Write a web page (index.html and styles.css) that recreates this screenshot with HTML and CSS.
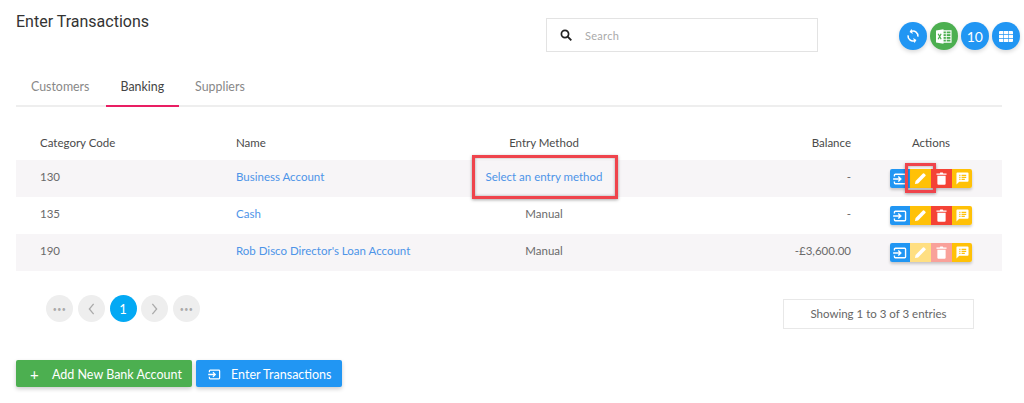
FILE: index.html
```html
<!DOCTYPE html>
<html lang="en">
<head>
<meta charset="utf-8">
<title>Enter Transactions</title>
<link rel="stylesheet" href="styles.css">
</head>
<body>
<svg class="defs" width="0" height="0" aria-hidden="true">
  <symbol id="i-enter" viewBox="0 0 16 14"><path d="M1.5 4V2.5a1 1 0 0 1 1-1h11a1 1 0 0 1 1 1v9a1 1 0 0 1-1 1h-11a1 1 0 0 1-1-1V10" fill="none" stroke="currentColor" stroke-width="1.6"/><path d="M0 7h8M6 4l3 3-3 3" fill="none" stroke="currentColor" stroke-width="1.6"/></symbol>
  <symbol id="i-pen" viewBox="0 0 14 14"><path d="M1 13l.7-3.4L9.6 1.7a1 1 0 0 1 1.4 0l1.3 1.3a1 1 0 0 1 0 1.4L4.4 12.3z" fill="currentColor"/></symbol>
  <symbol id="i-bin" viewBox="0 0 12 14"><path d="M0.5 1.5h3.5L4.7.5h2.6L8 1.5h3.5V3H.5zM1.5 4h9v8.6a1.2 1.2 0 0 1-1.2 1.2H2.7a1.2 1.2 0 0 1-1.2-1.2z" fill="currentColor"/></symbol>
  <symbol id="i-note" viewBox="0 0 14 14"><path fill-rule="evenodd" d="M1.5.5h11a1 1 0 0 1 1 1v8a1 1 0 0 1-1 1H3.5L.5 13.5v-12a1 1 0 0 1 1-1zM3.5 3v1.3h1.3V3zm2.5 0v1.3h5V3zM3.5 5.2v1.3h1.3V5.2zm2.5 0v1.3h5V5.2zM3.5 7.4v1.2h1.3V7.4zm2.5 0v1.2h3.5V7.4z" fill="currentColor"/></symbol>
</svg>

<main class="page">
  <header class="top">
    <h1 class="title">Enter Transactions</h1>
    <label class="search">
      <svg class="search-icon" viewBox="0 0 12 12" width="12" height="12"><circle cx="5" cy="5" r="3.6" fill="none" stroke="#222" stroke-width="1.7"/><path d="M7.7 7.7l3.6 3.6" stroke="#222" stroke-width="1.9"/></svg>
      <span class="search-text">Search</span>
    </label>
    <div class="tools">
      <span class="tool blue"><svg class="sync" viewBox="0 0 16 16" width="14" height="14"><path d="M13.2 5.8A5.6 5.6 0 0 0 3.6 4.4M2.8 10.2a5.6 5.6 0 0 0 9.6 1.4" fill="none" stroke="#fff" stroke-width="1.8"/><path d="M2.4 1.8v4.3h4.2zM13.6 14.2V9.9H9.4z" fill="#fff"/></svg></span>
      <span class="tool green"><svg viewBox="0 0 18 16" width="17" height="15"><path d="M8 2h9v12H8z" fill="none" stroke="#fff" stroke-width="1.2"/><path d="M12 2v12M8 5h9M8 8h9M8 11h9" stroke="#fff" stroke-width=".9"/><path d="M1 1.5l8-1.2v15.4l-8-1.2z" fill="#fff"/><path d="M3.3 5l3.2 6M6.5 5l-3.2 6" stroke="#4caf50" stroke-width="1.3"/></svg></span>
      <span class="tool blue count">10</span>
      <span class="tool blue"><svg viewBox="0 0 14 11" width="14" height="11"><path fill="#fff" d="M0 1a1 1 0 0 1 1-1h3.4v3.3H0zM5 0h4v3.3H5zM9.6 0H13a1 1 0 0 1 1 1v2.3H9.6zM0 3.9h4.4v3.2H0zM5 3.9h4v3.2H5zM9.6 3.9H14v3.2H9.6zM0 7.7h4.4V11H1a1 1 0 0 1-1-1zM5 7.7h4V11H5zM9.6 7.7H14V10a1 1 0 0 1-1 1H9.6z"/></svg></span>
    </div>
  </header>

  <nav class="tabs">
    <a class="tab">Customers</a>
    <a class="tab active">Banking</a>
    <a class="tab">Suppliers</a>
  </nav>

  <div class="table">
    <div class="row head">
      <div class="c-code">Category Code</div>
      <div class="c-name">Name</div>
      <div class="c-method">Entry Method</div>
      <div class="c-bal">Balance</div>
      <div class="c-act">Actions</div>
    </div>
    <div class="row shade">
      <div class="c-code">130</div>
      <div class="c-name"><a class="link">Business Account</a></div>
      <div class="c-method"><a class="link">Select an entry method</a><span class="mark mark-method"></span></div>
      <div class="c-bal">-</div>
      <div class="c-act">
        <div class="acts">
          <span class="act a-blue"><svg width="14" height="12"><use href="#i-enter"/></svg></span>
          <span class="act a-yellow"><svg width="13" height="13"><use href="#i-pen"/></svg><span class="mark mark-pen"></span></span>
          <span class="act a-red"><svg width="11" height="13"><use href="#i-bin"/></svg></span>
          <span class="act a-yellow"><svg width="13" height="13"><use href="#i-note"/></svg></span>
        </div>
      </div>
    </div>
    <div class="row">
      <div class="c-code">135</div>
      <div class="c-name"><a class="link">Cash</a></div>
      <div class="c-method">Manual</div>
      <div class="c-bal">-</div>
      <div class="c-act">
        <div class="acts">
          <span class="act a-blue"><svg width="14" height="12"><use href="#i-enter"/></svg></span>
          <span class="act a-yellow"><svg width="13" height="13"><use href="#i-pen"/></svg></span>
          <span class="act a-red"><svg width="11" height="13"><use href="#i-bin"/></svg></span>
          <span class="act a-yellow"><svg width="13" height="13"><use href="#i-note"/></svg></span>
        </div>
      </div>
    </div>
    <div class="row shade">
      <div class="c-code">190</div>
      <div class="c-name"><a class="link">Rob Disco Director's Loan Account</a></div>
      <div class="c-method">Manual</div>
      <div class="c-bal">-£3,600.00</div>
      <div class="c-act">
        <div class="acts">
          <span class="act a-blue"><svg width="14" height="12"><use href="#i-enter"/></svg></span>
          <span class="act a-yellow-off"><svg width="13" height="13"><use href="#i-pen"/></svg></span>
          <span class="act a-red-off"><svg width="11" height="13"><use href="#i-bin"/></svg></span>
          <span class="act a-yellow"><svg width="13" height="13"><use href="#i-note"/></svg></span>
        </div>
      </div>
    </div>
  </div>

  <div class="under">
    <div class="pager">
      <span class="pg dots">•••</span>
      <span class="pg"><svg viewBox="0 0 8 14" width="7" height="12"><path d="M6.5 1L1.5 7l5 6" fill="none" stroke="#aaa" stroke-width="1.5"/></svg></span>
      <span class="pg on">1</span>
      <span class="pg"><svg viewBox="0 0 8 14" width="7" height="12"><path d="M1.5 1l5 6-5 6" fill="none" stroke="#aaa" stroke-width="1.5"/></svg></span>
      <span class="pg dots">•••</span>
    </div>
    <div class="info">Showing 1 to 3 of 3 entries</div>
  </div>

  <div class="buttons">
    <button class="btn btn-green"><span class="plus">+</span>Add New Bank Account</button>
    <button class="btn btn-blue"><svg width="13" height="11"><use href="#i-enter"/></svg>Enter Transactions</button>
  </div>
</main>
</body>
</html>
```
FILE: styles.css
```css
* { box-sizing: border-box; }
html, body { margin: 0; background: #fff; }
body { font-family: "Lato", "Liberation Sans", sans-serif; color: #555; overflow: hidden; height: 403px; }
.defs { position: absolute; }
.page { width: 1024px; padding: 0 22px 0 16px; }

.top { display: flex; align-items: flex-start; height: 65px; }
.title { flex: none; margin: 12px 0 0; width: 530px; font-family: "Roboto", sans-serif; font-weight: 400; font-size: 16px; line-height: 19px; color: #333; }
.search { flex: none; margin-top: 18px; width: 272px; height: 34px; border: 1px solid #e3e3e3; display: flex; align-items: center; padding-left: 13px; background: #fff; }
.search-icon { margin-right: 13px; }
.search-text { font-size: 11px; color: #aaa; letter-spacing: .3px; }
.tools { flex: none; margin-left: 81px; margin-top: 22px; display: flex; gap: 3.5px; }
.tool { width: 27.5px; height: 28px; border-radius: 50%; display: flex; align-items: center; justify-content: center; box-shadow: 0 2px 4px rgba(0,0,0,.15); color: #fff; font-size: 14px; }
.blue { background: #2196f3; }
.green { background: #4caf50; }
.sync { transform: rotate(30deg); }

.tabs { display: flex; gap: 2px; height: 42px; border-bottom: 2px solid #eee; }
.tab { height: 42px; padding: 13px 15px 0; font-size: 12.4px; line-height: 17px; color: #888; }
.tab.active { color: #444; border-bottom: 2px solid #e91e63; padding: 13px 15px 0 14px; }
.tab:last-child { margin-left: -2px; padding-left: 16px; }

.table { margin-top: 21px; width: 986px; font-size: 11.5px; line-height: 14px; }
.row { display: grid; grid-template-columns: 220px 216px 184px 215px 151px; height: 37px; align-items: center; color: #6a6a6a; }
.row.head { height: 32px; color: #4a4a4a; }
.row > div { padding-bottom: 3px; }
.row > .c-act { padding-bottom: 0; }
.shade { background: #f7f5f7; }
.c-code { padding-left: 24px; }
.c-method { text-align: center; position: relative; }
.c-bal { text-align: right; }
.c-act { display: flex; justify-content: center; padding-left: 9px; }
.head .c-act { padding-bottom: 3px; }
.link { color: #4d94e8; }

.acts { display: flex; box-shadow: 0 2px 3px rgba(0,0,0,.2); border-radius: 2px; }
.act { height: 19px; display: flex; align-items: center; justify-content: center; color: #fff; position: relative; }
.a-blue { width: 20px; background: #2196f3; border-radius: 2px 0 0 2px; }
.a-yellow { width: 21px; background: #ffc107; }
.a-yellow:last-child { width: 20px; border-radius: 0 2px 2px 0; }
.a-red { width: 21px; background: #f44336; }
.a-yellow-off { width: 21px; background: #ffdf82; }
.a-red-off { width: 21px; background: #f9a19a; }

.mark { position: absolute; border: 3px solid #ef444c; box-shadow: 0 1px 3px rgba(0,0,0,.35), inset 0 0 3px rgba(0,0,0,.35); pointer-events: none; }
.mark-method { left: 20px; top: -15px; width: 146px; height: 44px; }
.mark-pen { left: -5px; top: -6px; width: 31px; height: 30px; }

.under { display: flex; justify-content: space-between; align-items: flex-start; margin-top: 24px; width: 958px; }
.pager { display: flex; gap: 4.75px; margin-left: 30px; }
.pg { width: 27px; height: 27px; border-radius: 50%; background: #eee; display: flex; align-items: center; justify-content: center; color: #aaa; font-size: 12px; }
.pg.dots { font-size: 7px; letter-spacing: .5px; }
.pg.on { background: #03a9f4; color: #fff; font-size: 13px; }
.info { margin-top: 4px; width: 191px; height: 30px; border: 1px solid #e8e8e8; font-size: 11.5px; line-height: 28px; text-align: center; color: #666; }

.buttons { display: flex; gap: 4px; margin-top: 31px; }
.btn { height: 27px; border: 0; border-radius: 2px; color: #fff; font-family: inherit; font-size: 12.5px; white-space: nowrap; display: flex; align-items: center; padding: 1px 0 0 14px; box-shadow: 0 2px 4px rgba(0,0,0,.2); }
.btn-green { width: 176px; background: #4caf50; }
.btn-blue { width: 146px; background: #2196f3; padding-left: 12px; }
.plus { width: 22px; font-size: 15px; text-align: left; margin-top: -1px; }
.btn-blue svg { margin-right: 10px; color: #fff; }
```
